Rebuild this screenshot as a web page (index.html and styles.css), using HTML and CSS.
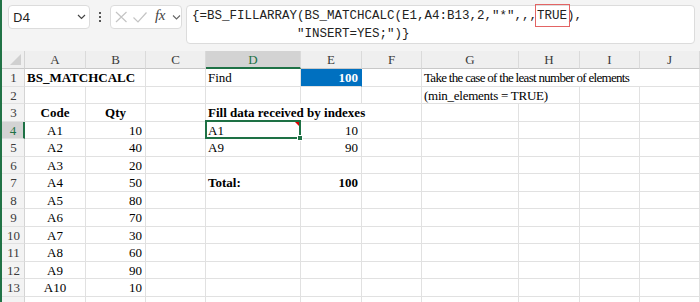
FILE: index.html
```html
<!DOCTYPE html>
<html>
<head>
<meta charset="utf-8">
<link rel="stylesheet" href="styles.css">
</head>
<body>
<div class="app">
  <div class="toolbar">
    <div class="namebox">
      <span class="nb-text">D4</span>
      <svg class="chev" width="9" height="6" viewBox="0 0 9 6"><path d="M1 1 L4.5 4.5 L8 1" fill="none" stroke="#444" stroke-width="1.2"/></svg>
    </div>
    <div class="dots"><i></i><i></i><i></i></div>
    <div class="fnbox">
      <svg width="72" height="24" viewBox="0 0 72 24">
        <path d="M6 7 L16.5 17 M16.5 7 L6 17" stroke="#c4c4c4" stroke-width="1.2" fill="none"/>
        <path d="M23.5 12.5 L28 17 L36.5 7.5" stroke="#c4c4c4" stroke-width="1.2" fill="none"/>
        <path d="M63 10.5 L66.5 14 L70 10.5" stroke="#666" stroke-width="1.1" fill="none"/>
      </svg>
      <span class="fx">fx</span>
    </div>
    <div class="formula"><span class="fline">{=BS_FILLARRAY(BS_MATCHCALC(E1,A4:B13,2,"*",,,<span class="hl">TRUE</span>),</span>
<span class="fline">              "INSERT=YES;")}</span></div>
  </div>
  <div class="sheet">
    <div class="corner"><span class="tri"></span></div>
    <div class="ch">A</div><div class="ch">B</div><div class="ch">C</div><div class="ch sel">D</div><div class="ch">E</div><div class="ch">F</div><div class="ch">G</div><div class="ch">H</div><div class="ch">I</div><div class="ch">J</div>

    <div class="rh">1</div><div class="c b s2">BS_MATCHCALC</div><div class="c"></div><div class="c">Find</div><div class="c b r blue">100</div><div class="c"></div><div class="c s4 tight">Take the case of the least number of elements</div>

    <div class="rh">2</div><div class="c"></div><div class="c"></div><div class="c"></div><div class="c"></div><div class="c"></div><div class="c"></div><div class="c s2 tight2">(min_elements = TRUE)</div><div class="c"></div><div class="c"></div>

    <div class="rh">3</div><div class="c b ctr">Code</div><div class="c b ctr">Qty</div><div class="c"></div><div class="c b s3">Fill data received by indexes</div><div class="c"></div><div class="c"></div><div class="c"></div><div class="c"></div>

    <div class="rh sel">4</div><div class="c ctr">A1</div><div class="c r">10</div><div class="c"></div><div class="c active">A1<span class="note"></span><span class="handle"></span></div><div class="c r">10</div><div class="c"></div><div class="c"></div><div class="c"></div><div class="c"></div><div class="c"></div>

    <div class="rh">5</div><div class="c ctr">A2</div><div class="c r">40</div><div class="c"></div><div class="c">A9</div><div class="c r">90</div><div class="c"></div><div class="c"></div><div class="c"></div><div class="c"></div><div class="c"></div>

    <div class="rh">6</div><div class="c ctr">A3</div><div class="c r">20</div><div class="c"></div><div class="c"></div><div class="c"></div><div class="c"></div><div class="c"></div><div class="c"></div><div class="c"></div><div class="c"></div>

    <div class="rh">7</div><div class="c ctr">A4</div><div class="c r">50</div><div class="c"></div><div class="c b">Total:</div><div class="c b r">100</div><div class="c"></div><div class="c"></div><div class="c"></div><div class="c"></div><div class="c"></div>

    <div class="rh">8</div><div class="c ctr">A5</div><div class="c r">80</div><div class="c"></div><div class="c"></div><div class="c"></div><div class="c"></div><div class="c"></div><div class="c"></div><div class="c"></div><div class="c"></div>

    <div class="rh">9</div><div class="c ctr">A6</div><div class="c r">70</div><div class="c"></div><div class="c"></div><div class="c"></div><div class="c"></div><div class="c"></div><div class="c"></div><div class="c"></div><div class="c"></div>

    <div class="rh">10</div><div class="c ctr">A7</div><div class="c r">30</div><div class="c"></div><div class="c"></div><div class="c"></div><div class="c"></div><div class="c"></div><div class="c"></div><div class="c"></div><div class="c"></div>

    <div class="rh">11</div><div class="c ctr">A8</div><div class="c r">60</div><div class="c"></div><div class="c"></div><div class="c"></div><div class="c"></div><div class="c"></div><div class="c"></div><div class="c"></div><div class="c"></div>

    <div class="rh">12</div><div class="c ctr">A9</div><div class="c r">90</div><div class="c"></div><div class="c"></div><div class="c"></div><div class="c"></div><div class="c"></div><div class="c"></div><div class="c"></div><div class="c"></div>

    <div class="rh">13</div><div class="c ctr">A10</div><div class="c r">10</div><div class="c"></div><div class="c"></div><div class="c"></div><div class="c"></div><div class="c"></div><div class="c"></div><div class="c"></div><div class="c"></div>

    <div class="rh">14</div><div class="c"></div><div class="c"></div><div class="c"></div><div class="c"></div><div class="c"></div><div class="c"></div><div class="c"></div><div class="c"></div><div class="c"></div><div class="c"></div>
  </div>
</div>
</body>
</html>
```

FILE: styles.css
```css
html, body {
  margin: 0;
  padding: 0;
}
body {
  width: 700px;
  height: 302px;
  overflow: hidden;
  background: #fff;
  font-family: "Liberation Serif", "Times New Roman", serif;
}
.app {
  height: 302px;
  border-left: 2px solid #217346;
  box-sizing: border-box;
  display: flex;
  flex-direction: column;
  overflow: hidden;
}
.toolbar {
  height: 51px;
  flex: none;
  box-sizing: border-box;
  background: #f4f4f4;
  display: flex;
  align-items: flex-start;
  padding: 5px 5px 0 6px;
}
.namebox {
  width: 82px;
  height: 24px;
  box-sizing: border-box;
  background: #fff;
  border: 1px solid #dcdcdc;
  border-radius: 4px;
  display: flex;
  align-items: center;
  justify-content: space-between;
  padding: 0 3px 0 4px;
}
.nb-text {
  font-family: "Noto Sans", "Liberation Sans", sans-serif;
  font-size: 13px;
  color: #222;
}
.chev {
  display: block;
}
.dots {
  width: 20px;
  height: 24px;
  display: flex;
  flex-direction: column;
  align-items: center;
  justify-content: center;
  gap: 2px;
}
.dots i {
  display: block;
  width: 2px;
  height: 2px;
  background: #555;
}
.fnbox {
  position: relative;
  width: 72px;
  height: 24px;
  box-sizing: border-box;
  background: #fff;
  border: 1px solid #dcdcdc;
  border-radius: 4px;
  margin-right: 4px;
}
.fnbox svg {
  position: absolute;
  left: -1px;
  top: -1px;
}
.fx {
  position: absolute;
  left: 44px;
  top: 1px;
  font-family: "Liberation Serif", serif;
  font-style: italic;
  font-size: 15px;
  color: #444;
  letter-spacing: -0.5px;
}
.formula {
  width: 509px;
  height: 39px;
  box-sizing: border-box;
  background: #fff;
  border: 1px solid #dcdcdc;
  border-radius: 4px;
  padding: 1px 0 0 5px;
  font-family: "Liberation Mono", "Courier New", monospace;
  font-size: 12.5px;
  line-height: 18px;
  white-space: pre;
  color: #222;
}
.hl {
  position: relative;
}
.hl::after {
  content: "";
  position: absolute;
  left: -2px;
  right: -3px;
  top: -5px;
  bottom: -4px;
  border: 1px solid #e36464;
}
.sheet {
  display: grid;
  grid-template-columns: 23px 61px 60px 60px 95px 61px 60px 97px 61px 60px 60px;
  grid-template-rows: 18px repeat(14, 17.5px);
  font-size: 13px;
  line-height: 17.5px;
  color: #000;
}
.corner {
  position: relative;
  background: #efefef;
  border-right: 1px solid #d4d4d4;
  border-bottom: 1px solid #c8c8c8;
  box-sizing: border-box;
}
.tri {
  position: absolute;
  right: 3px;
  bottom: 3px;
  width: 0;
  height: 0;
  border-left: 11px solid transparent;
  border-bottom: 11px solid #d0d0d0;
}
.ch {
  background: #efefef;
  border-right: 1px solid #dadada;
  border-bottom: 1px solid #c8c8c8;
  box-sizing: border-box;
  text-align: center;
  color: #3b3b3b;
  line-height: 18px;
  font-size: 13px;
}
.ch.sel {
  background: #d3d3d3;
  color: #1e7145;
  border-bottom: 2px solid #1e7145;
  line-height: 17px;
}
.rh {
  background: #f3f3f3;
  border-right: 1px solid #d4d4d4;
  border-bottom: 1px solid #e1e1e1;
  box-sizing: border-box;
  text-align: center;
  color: #3b3b3b;
  padding-left: 1px;
}
.rh.sel {
  background: #d3d3d3;
  color: #1e7145;
  border-right: 2px solid #1e7145;
}
.c {
  border-right: 1px solid #e1e1e1;
  border-bottom: 1px solid #e1e1e1;
  box-sizing: border-box;
  padding: 0 2px;
  white-space: nowrap;
  overflow: visible;
}
.tight {
  letter-spacing: -0.7px;
}
.tight2 {
  letter-spacing: -0.25px;
}
.b { font-weight: bold; }
.r { text-align: right; padding-right: 3px; }
.ctr { text-align: center; }
.s2 { grid-column: span 2; }
.s3 { grid-column: span 3; }
.s4 { grid-column: span 4; }
.blue {
  background: #0070c0;
  color: #fff;
  border-right-color: #0070c0;
}
.active {
  position: relative;
}
.active::after {
  content: "";
  position: absolute;
  left: -1px;
  top: -2px;
  right: -1px;
  bottom: -1px;
  border: 2px solid #1e7145;
  pointer-events: none;
}
.note {
  position: absolute;
  right: 1px;
  top: 0;
  width: 0;
  height: 0;
  border-top: 4px solid #e00000;
  border-left: 4px solid transparent;
  z-index: 2;
}
.handle {
  position: absolute;
  right: -3px;
  bottom: -3px;
  width: 4px;
  height: 4px;
  background: #1e7145;
  border: 1px solid #fff;
  z-index: 2;
}
```
